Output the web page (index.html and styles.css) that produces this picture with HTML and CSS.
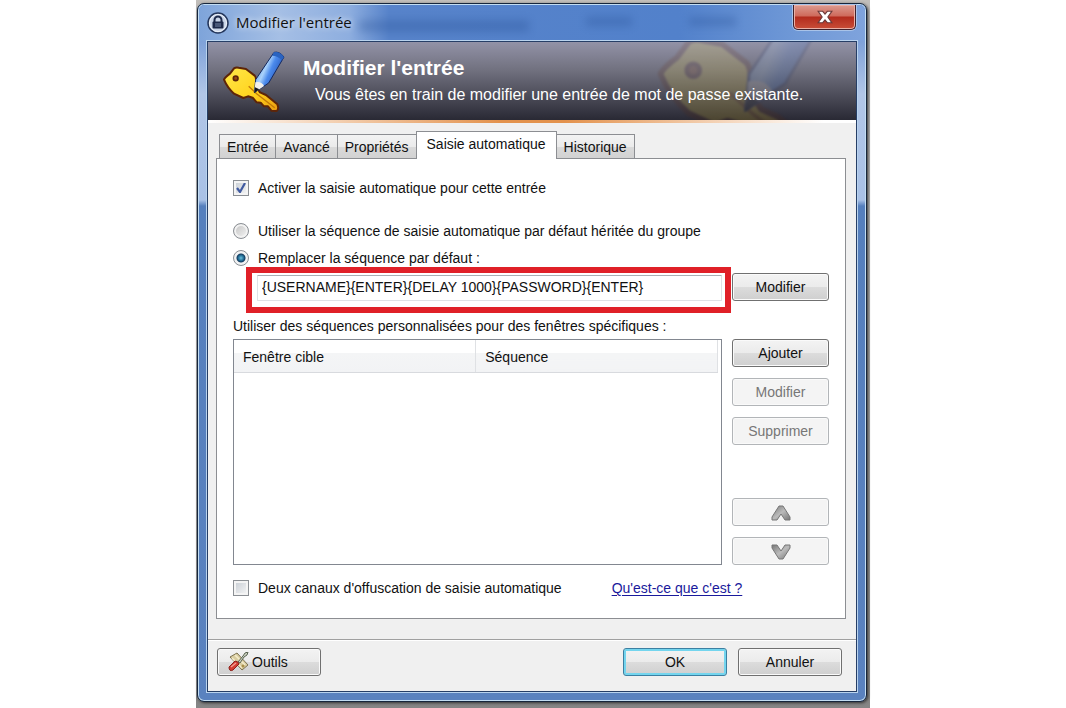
FILE: index.html
```html
<!DOCTYPE html>
<html lang="fr">
<head>
<meta charset="utf-8">
<title>Modifier l'entrée</title>
<link rel="stylesheet" href="styles.css">
</head>
<body>
<svg class="defs" aria-hidden="true">
  <defs>
    <linearGradient id="gold" x1="0" y1="0" x2="1" y2="1">
      <stop offset="0" stop-color="#ffe94a"/><stop offset=".6" stop-color="#ffd21c"/><stop offset="1" stop-color="#e89a10"/>
    </linearGradient>
    <linearGradient id="blue" x1="0" y1="0" x2="1" y2="0.6">
      <stop offset="0" stop-color="#2f6bd0"/><stop offset=".45" stop-color="#a9d2fb"/><stop offset=".6" stop-color="#4b8aec"/><stop offset="1" stop-color="#1845a8"/>
    </linearGradient>
    <linearGradient id="steel" x1="0" y1="0" x2="1" y2="1">
      <stop offset="0" stop-color="#777"/><stop offset=".5" stop-color="#bbb"/><stop offset="1" stop-color="#777"/>
    </linearGradient>
    <symbol id="key" viewBox="48 12 192 198">
      <path d="M54 104 Q56 98 72 86 L84 70 Q90 66 98 68 L120 72 L146 92 Q152 98 150 124 L162 142 L180 150 L214 178 Q220 192 212 198 L196 197 L186 184 L174 184 L164 173 L152 172 L140 158 L126 154 L112 159 L84 146 Q64 128 54 104Z" fill="url(#gold)" stroke="#5d2508" stroke-width="6" stroke-linejoin="round"/>
      <path d="M128 124 L152 146 L206 188" fill="none" stroke="#c27908" stroke-width="4"/>
      <circle cx="89" cy="100" r="7" fill="#9a4a10" stroke="#5d2508" stroke-width="5"/>
      <path d="M204 22 Q220 18 234 36 L188 114 L145 143 L149 104Z" fill="url(#blue)" stroke="#15295f" stroke-width="3" stroke-linejoin="round"/>
      <path d="M148 112 Q166 108 174 123 L145 143Z" fill="#f4f1ea"/>
      <path d="M147 127 L160 133 L144 145Z" fill="#181818"/>
      <path d="M204 22 Q220 18 234 36 L228 46 Q216 32 198 32Z" fill="#2a63c0"/>
    </symbol>
  </defs>
</svg>
<div class="stage">
<main class="window">
  <header class="titlebar">
    <svg class="lock" viewBox="0 0 22 22" aria-hidden="true">
      <circle cx="11" cy="11" r="10" fill="#c8d4e8" stroke="#25375c" stroke-width="1.5"/>
      <circle cx="11" cy="11" r="8.5" fill="none" stroke="#eef3fa" stroke-width="1"/>
      <path d="M7.5 10V8a3.5 3.5 0 0 1 7 0v2" fill="none" stroke="#1d2a4b" stroke-width="2"/>
      <rect x="5.5" y="9.500" width="11" height="7" rx="1" fill="#1d2a4b"/>
      <path d="M8 12h6M8 14h6" stroke="#7787a8"/>
    </svg>
    <h1 class="caption">Modifier l'entrée</h1>
    <i class="smudge smudge-wide"></i><i class="smudge"></i><i class="smudge"></i>
    <button class="close" type="button" aria-label="Fermer">
      <svg viewBox="0 0 14 12" aria-hidden="true"><path d="M1 1h4l2 2.500L9 1h4L9.500 6 13 11H9L7 8.500 5 11H1l3.500-5z" fill="#fff" stroke="#6d3a3a" stroke-width="1"/></svg>
    </button>
  </header>
  <form class="client">
    <div class="banner">
      <svg class="watermark" aria-hidden="true"><use href="#key"/></svg>
      <svg class="key" aria-hidden="true"><use href="#key"/></svg>
      <div class="heading">
        <h2>Modifier l'entrée</h2>
        <p>Vous êtes en train de modifier une entrée de mot de passe existante.</p>
      </div>
    </div>
    <div class="rule"></div>
    <div class="tabs" role="tablist">
      <button type="button" role="tab" class="tab">Entrée</button>
      <button type="button" role="tab" class="tab">Avancé</button>
      <button type="button" role="tab" class="tab">Propriétés</button>
      <button type="button" role="tab" class="tab selected" aria-selected="true">Saisie automatique</button>
      <button type="button" role="tab" class="tab">Historique</button>
    </div>
    <section class="panel">
      <label class="option enable"><input type="checkbox" checked>Activer la saisie automatique pour cette entrée</label>
      <label class="option inherit"><input type="radio" name="seq">Utiliser la séquence de saisie automatique par défaut héritée du groupe</label>
      <label class="option override"><input type="radio" name="seq" checked>Remplacer la séquence par défaut :</label>
      <div class="sequence">
        <div class="highlight"><input type="text" aria-label="Séquence" value="{USERNAME}{ENTER}{DELAY 1000}{PASSWORD}{ENTER}"></div>
        <button class="btn" type="button">Modifier</button>
      </div>
      <p class="label">Utiliser des séquences personnalisées pour des fenêtres spécifiques :</p>
      <div class="custom">
        <div class="list">
          <table>
            <thead><tr><th scope="col">Fenêtre cible</th><th scope="col">Séquence</th></tr></thead>
          </table>
        </div>
        <div class="actions">
          <button class="btn" type="button">Ajouter</button>
          <button class="btn" type="button" disabled>Modifier</button>
          <button class="btn" type="button" disabled>Supprimer</button>
          <button class="btn up" type="button" disabled aria-label="Monter"><svg class="arrow" viewBox="0 0 20 16" aria-hidden="true"><path d="M8 1h4l7 11v3h-5l-4-6-4 6H1v-3z" fill="url(#steel)" stroke="#777"/></svg></button>
          <button class="btn" type="button" disabled aria-label="Descendre"><svg class="arrow" viewBox="0 0 20 16" aria-hidden="true"><path d="M8 15h4l7-11V1h-5l-4 6-4-6H1v3z" fill="url(#steel)" stroke="#777"/></svg></button>
        </div>
      </div>
      <div class="last">
        <label class="option"><input type="checkbox">Deux canaux d'offuscation de saisie automatique</label>
        <a href="#help">Qu'est-ce que c'est ?</a>
      </div>
    </section>
    <footer class="footer">
      <button class="btn tools" type="button">
        <svg class="toolicon" viewBox="0 0 22 20" aria-hidden="true">
          <path d="M3 5l7-4 11 12-6 5z" fill="#d9cda0" stroke="#7d7352"/>
          <path d="M5 6l10 10M8 3l10 10" stroke="#f4eccb" stroke-width="1.500"/>
          <path d="M11 10l5-6 2-3 3-1-1 3-3 2-4 6z" fill="#cfd4c4" stroke="#55604e"/>
          <path d="M2 15l6-6q3 0 4 3l-6 6q-4 2-4-3z" fill="#d23d32" stroke="#8d221d"/>
          <path d="M4 15l5-4" stroke="#f3a094" stroke-width="1.500"/>
          <circle cx="16" cy="14" r="1.500" fill="#a88f4a"/>
        </svg>Outils
      </button>
      <button class="btn ok" type="submit">OK</button>
      <button class="btn" type="button">Annuler</button>
    </footer>
  </form>
</main>
</div>
</body>
</html>
```
FILE: styles.css
```css
* { box-sizing: border-box; }
body {
  margin: 0;
  background: #fff;
  color: #111;
  font: 14px/18px "Liberation Sans", Arial, sans-serif;
}
h1, h2, p { margin: 0; font-weight: normal; }
button, input { font: inherit; color: inherit; }
.defs { position: absolute; width: 0; height: 0; }
.stage {
  max-width: 674px;
  min-height: 100vh;
  margin: 0 auto;
  padding: 3px 3px 7px 1px;
  background: linear-gradient(to bottom, #c2bfbb, #aaa 40px, #b0b0b0 200px, #858585);
}
.window {
  padding: 0 9px 9px;
  border: 1px solid #16263c;
  border-radius: 7px;
  box-shadow: inset 0 0 0 1px #c3ddf2, 1px 1px 3px #333;
  background: linear-gradient(to bottom, #6a93d2 0, #7fa2d9 38px, #b1c6e7 90px, #a9c1e6 196px, #557fbd 202px, #5a82bf);
}
.titlebar {
  display: flex;
  align-items: flex-start;
  gap: 7px;
  height: 36px;
  margin: 1px -8px 0;
  padding: 0 8px;
  border-radius: 6px 6px 0 0;
  background: linear-gradient(to right, #7ea4da, #a5bfe5 80px, #8eaedf 150px, #5783ca 190px, #5281cb 480px, #7099d7 600px, #7fa3dc);
}
.lock { flex: none; width: 22px; height: 22px; margin-top: 7px; }
.caption { flex: none; margin-top: 7px; font: 15px/20px "Open Sans", "Noto Sans", sans-serif; white-space: nowrap; color: #111; text-shadow: 0 0 6px #fff; }
.smudge { width: 52px; height: 9px; margin: 12px 50px 0 0; background: #234c91; opacity: .3; filter: blur(4px); }
.smudge-wide { width: 190px; height: 12px; margin-top: 15px; }
.close {
  flex: none;
  width: 63px;
  height: 25px;
  margin: 0 1px 0 auto;
  padding: 0 0 2px;
  border: 1px solid #41202a;
  border-top: 0;
  border-radius: 0 0 5px 5px;
  box-shadow: inset 0 0 0 1px #eab0a6, 0 0 0 1px #a9c3e8;
  background: linear-gradient(#dc9b90, #cf6a5b 11px, #b32b1d 12px, #c94e38);
}
.close svg { width: 16px; height: 14px; vertical-align: middle; }
.client {
  display: block;
  border: 1px solid #263e66;
  box-shadow: 0 0 0 1px #b9d3ee;
  background: #f0f0f0;
}
.banner {
  position: relative;
  overflow: hidden;
  display: flex;
  height: 78px;
  padding: 7px 14px 0;
  gap: 17px;
  color: #fff;
  background: linear-gradient(#9292a7, #71717f 28px, #292934);
}
.watermark { position: absolute; right: 22px; top: -54px; width: 179px; height: 185px; opacity: .16; filter: blur(1px); }
.key { flex: none; width: 64px; height: 66px; }
.heading { position: relative; }
.heading h2 { margin-top: 6px; font-size: 21px; line-height: 26px; font-weight: bold; }
.heading p { margin: 4px 0 0 12px; font-size: 16px; line-height: 20px; }
.rule { height: 3px; background: linear-gradient(to right, #fff, #e3924d 45%, #e3924d 55%, #fff 95%); }
.tabs { display: flex; align-items: flex-end; padding: 8px 12px 0; }
.tab {
  height: 24px;
  padding: 0 7px;
  margin: 0 0 0 -1px;
  border: 1px solid #8c8e92;
  border-bottom: 0;
  background: linear-gradient(#f3f3f3, #ebebeb 50%, #dadada 51%, #d2d2d2);
}
.tab.selected { position: relative; height: 28px; margin-bottom: -1px; padding: 0 10px 3px; background: #fff; }
.panel { margin: 0 10px 0 8px; padding: 15px 16px 7px; border: 1px solid #8c8e92; background: #fff; }
.option { display: flex; align-items: center; gap: 9px; }
.option input { appearance: none; flex: none; width: 16px; height: 16px; margin: 0; border: 1px solid #8b8f94; }
.option input[type="checkbox"] { box-shadow: inset 0 0 0 2px #f4f4f4; background: linear-gradient(135deg, #c5cbd2, #f8f8f8); }
.option input[type="checkbox"]:checked {
  background: url("data:image/svg+xml,%3Csvg xmlns='http://www.w3.org/2000/svg' viewBox='0 0 14 14'%3E%3Cpath d='M3 7l3 4 5-9' fill='none' stroke='%23405aa0' stroke-width='2.2'/%3E%3C/svg%3E"), linear-gradient(135deg, #c5cbd2, #f8f8f8);
}
.option input[type="radio"] { border-radius: 50%; box-shadow: inset 0 0 0 2px #f2f2f2; background: linear-gradient(135deg, #c1c1c1, #f6f6f6); }
.option input[type="radio"]:checked { background: radial-gradient(circle at 50% 50%, #69bfdd 0, #1d648c 3px, #163a5c 4px, #dfe7ed 5px); }
.enable { height: 28px; }
.inherit { height: 20px; margin-top: 19px; }
.override { height: 18px; margin-top: 8px; }
.sequence { display: grid; grid-template-columns: 1fr 97px; gap: 1px; margin-left: 13px; }
.highlight { padding: 2px 3px 6px 5px; border: 6px solid #e02028; }
.highlight input { display: block; width: 100%; height: 26px; padding: 0 4px 2px; border: 1px solid #dfe2e6; border-top-color: #a9adb3; border-radius: 1px; background: #fff; }
.sequence .btn { margin-top: 6px; }
.btn {
  height: 28px;
  padding: 0 6px;
  border: 1px solid #707070;
  border-radius: 3px;
  box-shadow: inset 0 0 0 1px #fafafa;
  background: linear-gradient(#f3f3f3, #ebebeb 50%, #dcdcdc 51%, #cfcfcf);
}
.btn:disabled { border-color: #b2b5b8; background: #f4f4f4; color: #777; }
.label { line-height: 26px; }
.custom { display: grid; grid-template-columns: 1fr 97px; gap: 10px; }
.list { min-height: 226px; border: 1px solid #828790; padding: 0 3px 0 0; }
.list table { width: 100%; table-layout: fixed; border-collapse: collapse; }
.list th {
  height: 32px;
  padding: 2px 9px 0;
  border-right: 1px solid #dfe1e4;
  border-bottom: 1px solid #d8dade;
  font-weight: normal;
  text-align: left;
  background: linear-gradient(#fff 40%, #f4f5f6 42%, #f2f3f5);
}
.actions { display: flex; flex-direction: column; gap: 11px; }
.actions .up { margin-top: auto; }
.arrow { width: 20px; height: 16px; vertical-align: middle; }
.last { display: flex; align-items: center; gap: 50px; height: 46px; }
.last a { color: #1a1a9c; text-underline-offset: 2px; }
.footer { display: flex; gap: 11px; margin-top: 20px; padding: 8px 14px 15px 9px; border-top: 1px solid #a0a0a0; box-shadow: inset 0 1px #fff; }
.footer .btn { width: 104px; }
.footer .tools { display: flex; align-items: center; gap: 3px; margin-right: auto; padding-left: 9px; }
.toolicon { width: 22px; height: 20px; }
.footer .ok { border-color: #3c7fa1; box-shadow: inset 0 0 0 2px #74d5ee; }
```
